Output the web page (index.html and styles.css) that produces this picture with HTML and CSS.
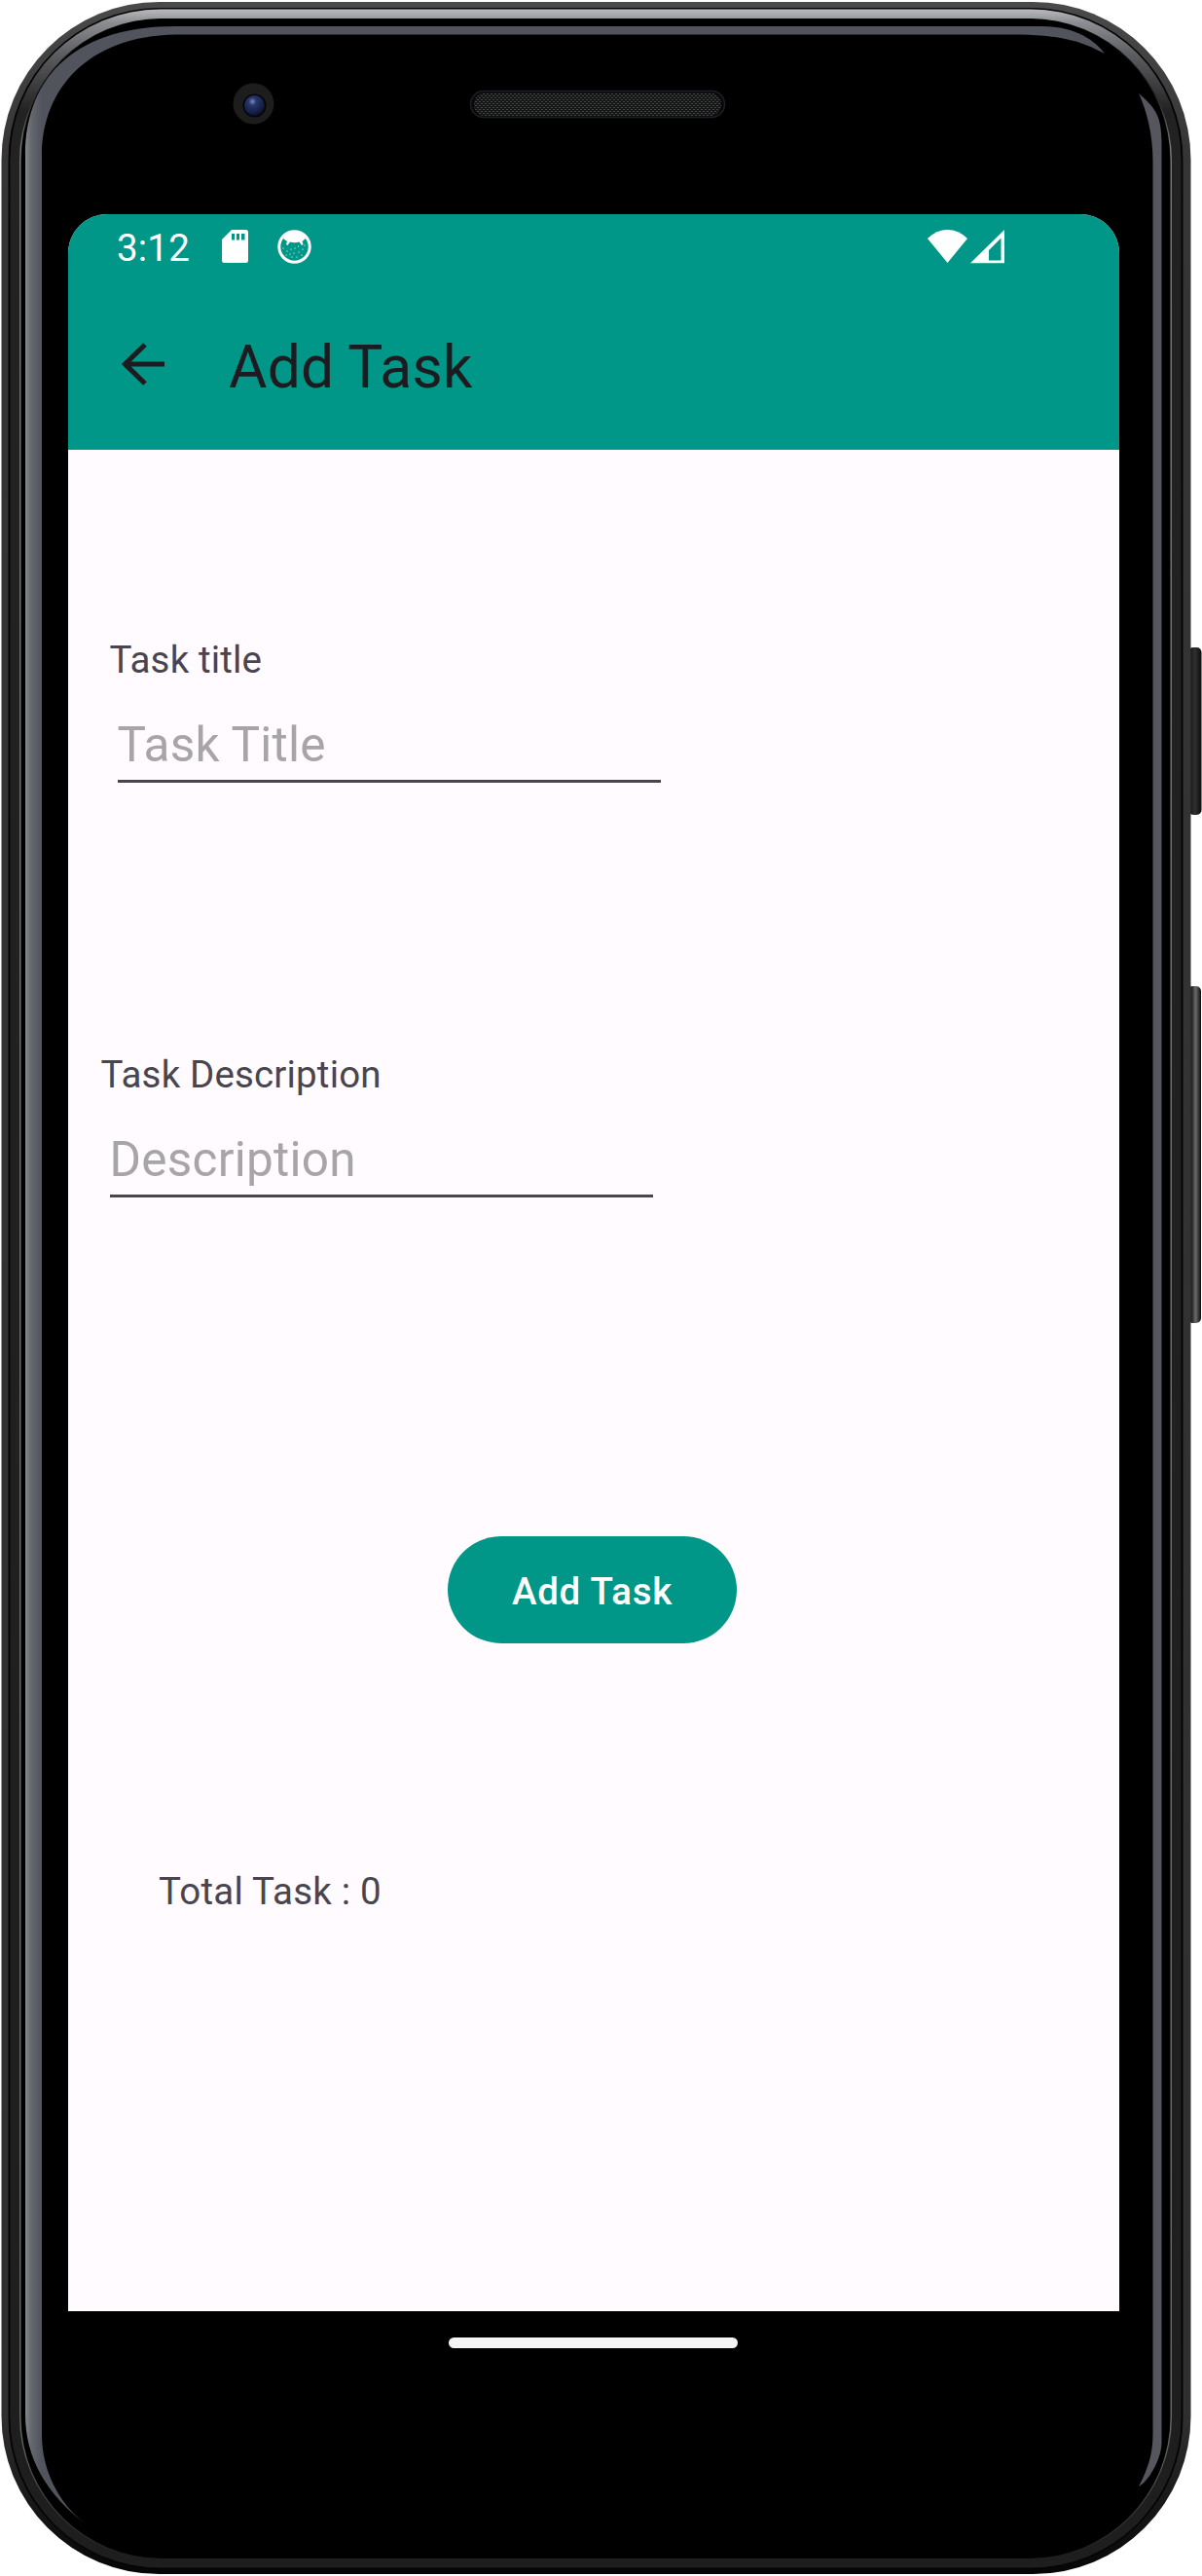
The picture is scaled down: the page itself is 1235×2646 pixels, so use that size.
FILE: index.html
```html
<!DOCTYPE html>
<html lang="en">
<head>
<meta charset="utf-8">
<title>Add Task</title>
<link rel="stylesheet" href="styles.css">
</head>
<body>
<div class="phone">
  <svg class="shell" viewBox="0 0 1235 2646" aria-hidden="true">
    <defs>
      <linearGradient id="bevel" x1="0" y1="0" x2="0" y2="1">
        <stop offset="0" stop-color="#b9babd"/><stop offset=".005" stop-color="#8d8e92"/>
        <stop offset=".018" stop-color="#5b5c60"/><stop offset=".04" stop-color="#222"/><stop offset="1" stop-color="#1e1e1e"/>
      </linearGradient>
      <linearGradient id="rim" x1="0" y1="0" x2="0" y2="1">
        <stop offset="0" stop-color="#4a4a4a"/><stop offset=".06" stop-color="#363435"/>
        <stop offset=".94" stop-color="#302e2f"/><stop offset="1" stop-color="#050505"/>
      </linearGradient>
      <linearGradient id="glint" gradientUnits="userSpaceOnUse" x1="26" y1="0" x2="43" y2="0">
        <stop offset="0" stop-color="#85878c"/><stop offset=".35" stop-color="#666870"/><stop offset="1" stop-color="#52545d"/>
      </linearGradient>
      <linearGradient id="line" x1="0" y1="0" x2="0" y2="1">
        <stop offset="0" stop-color="#000"/><stop offset=".03" stop-color="#222"/><stop offset=".05" stop-color="#777"/>
        <stop offset=".95" stop-color="#666"/><stop offset="1" stop-color="#222"/>
      </linearGradient>
      <linearGradient id="key" x1="0" y1="0" x2="1" y2="0">
        <stop offset="0" stop-color="#111"/><stop offset=".5" stop-color="#303030"/><stop offset="1" stop-color="#0c0c0c"/>
      </linearGradient>
      <linearGradient id="key2" x1="0" y1="0" x2="1" y2="0">
        <stop offset="0" stop-color="#111"/><stop offset=".35" stop-color="#2a2a2a"/><stop offset=".6" stop-color="#6a6a6a"/><stop offset="1" stop-color="#0c0c0c"/>
      </linearGradient>
      <radialGradient id="lens" cx=".4" cy=".3" r=".75">
        <stop offset="0" stop-color="#7d88b4"/><stop offset=".25" stop-color="#28376c"/><stop offset=".7" stop-color="#15214a"/><stop offset="1" stop-color="#080c1c"/>
      </radialGradient>
      <pattern id="mesh" width="4" height="4" patternUnits="userSpaceOnUse">
        <rect width="4" height="4" fill="#151616"/><path d="M0 0h2v1H0zM2 2h2v1H2z" fill="#434644"/>
      </pattern>
    </defs>
    <rect x="1221" y="665" width="13.500" height="172" rx="5" fill="url(#key)"/>
    <rect x="1220" y="1013" width="14" height="346" rx="5" fill="url(#key2)"/>
    <rect x="1.500" y="2" width="1222" height="2642" rx="162" fill="url(#rim)"/>
    <rect x="8.500" y="8" width="1207" height="2631" rx="156" fill="#050505"/>
    <rect x="10.500" y="9.500" width="1203" height="2628" rx="154" fill="url(#bevel)"/>
    <rect x="20" y="19" width="1184" height="2609.500" rx="146" fill="url(#line)"/>
    <rect x="21.500" y="19.500" width="1181" height="2608.500" rx="145" fill="#000"/>
    <path fill="url(#glint)" d="M87 2592Q26 2545 26 2480V160C26 75 82 27 180 27H1070C1107 27 1126 43 1135 55C1110 42 1090 35.500 1040 35.500H180C92 37 43 90 43 160V2500C43 2535 58 2569 87 2592Z"/>
    <path fill="#55565e" d="M1170 96C1187 111 1193 118 1193.500 145V2510C1193 2526 1180 2549 1170 2554C1180 2535 1184.500 2520 1184.500 2500V165C1184.500 138 1178 113 1170 96Z"/>
    <circle cx="260.500" cy="106.500" r="21" fill="#1d1d1e"/>
    <circle cx="261.500" cy="108.500" r="12" fill="#050507"/>
    <circle cx="261.500" cy="108.500" r="10.500" fill="url(#lens)"/>
    <rect x="483.500" y="93.500" width="261" height="27" rx="13.500" fill="#08080a" stroke="#1f1f26" stroke-width="1.500"/>
    <rect x="487" y="95.500" width="254" height="23.500" rx="11.500" fill="url(#mesh)"/>
  </svg>

  <main class="screen">
    <div class="status">
      <span class="clock">3:12</span>
      <svg class="sd" viewBox="0 0 27 34"><path fill="#fff" fill-rule="evenodd" d="M10 0H24.500Q27 0 27 2.500V31.500Q27 34 24.500 34H2.500Q0 34 0 31.500V10ZM10 4V10.500H13V4ZM15 4V10.500H18V4ZM20 4V10.500H23.500V4Z"/></svg>
      <svg class="cat" viewBox="0 0 35 35"><circle cx="17.500" cy="17.500" r="15.700" fill="none" stroke="#fff" stroke-width="3"/><path fill="#fff" d="M6 9Q10 2 17.500 2T29 9L25.500 12L26.500 15L25 16L22.500 12.500Q17.500 14 13 12.500L10.500 16L9 15L10 12Z"/><path stroke="#fff" stroke-width="1.200" stroke-linecap="round" d="M10 22h.1M6 19h.1M14 20h.1M17 24h.1M21.500 17h.1M26 20h.1M22 23h.1M15 28h.1M20 28h.1M9 26h.1M25 26h.1M13 25h.1M18 19h.1M28 16h.1"/></svg>
      <svg class="signals" viewBox="0 0 80 36"><path fill="#fff" d="M0 10Q9 1 20.500 1T41 10L20.500 35Z"/><path fill="#fff" fill-rule="evenodd" d="M44 35.300L79 1V35.300ZM63 22V32.500H75.500V9.500Z"/></svg>
    </div>
    <header class="bar">
      <svg class="back" viewBox="0 0 44 44"><path d="M24 2L3.500 22L24 42M3.500 22H44" fill="none" stroke="#1c1b1f" stroke-width="5.200"/></svg>
      <h1>Add Task</h1>
    </header>
    <section class="field first">
      <label for="t">Task title</label>
      <input id="t" placeholder="Task Title">
    </section>
    <section class="field second">
      <label for="d">Task Description</label>
      <input id="d" placeholder="Description">
    </section>
    <button class="add">Add Task</button>
    <p class="total">Total Task : 0</p>
  </main>
  <div class="handle"></div>
</div>
</body>
</html>
```
FILE: styles.css
```css
* { box-sizing: border-box; }
body { margin: 0; background: #fff; font-family: Roboto, sans-serif; }
.phone { display: grid; grid-template: 220px 2154px 1fr / 70px 1080px 1fr; width: 1235px; height: 2646px; }
.shell { grid-area: 1 / 1 / 4 / 4; width: 1235px; height: 2646px; }
.screen { grid-area: 2 / 2; z-index: 1; background: #fffbfe; border-radius: 40px 40px 0 0; overflow: hidden; display: flex; flex-direction: column; }
.status { flex: none; display: flex; align-items: flex-start; height: 66px; padding: 0 117px 0 50px; background: #009688; color: #fff; }
.clock { width: 108px; padding-top: 12px; font-size: 38.5px; line-height: 45px; letter-spacing: .2px; }
.sd { width: 27px; height: 34px; margin-top: 16px; }
.cat { width: 35px; height: 35px; margin: 16px 0 0 30px; }
.signals { width: 80px; height: 36px; margin: 14.5px 0 0 auto; }
.bar { flex: none; display: flex; align-items: center; height: 176px; padding: 0 0 0 55px; background: #009688; }
.back { width: 44px; height: 44px; margin-top: 0; }
h1 { margin: 8px 0 0 66px; font-size: 60.5px; line-height: 70px; letter-spacing: .2px; font-weight: 400; color: #1c1b1f; }
.field { display: flex; flex-direction: column; width: 558px; }
.field label { font-size: 38.5px; line-height: 46px; letter-spacing: .16px; color: #49454f; }
.field input { height: 82px; margin: 21px 0 0 8px; padding: 7px 0 0; width: 558px; border: 0; border-bottom: 3px solid #49454f; background: none; font: 49.5px/58px Roboto, sans-serif; letter-spacing: .26px; color: #1c1b1f; outline: 0; }
.field input::placeholder { color: #a7a5a7; opacity: 1; }
.first { margin: 193px 0 0 42.5px; }
.second { margin: 277px 0 0 33.5px; }
.second input { margin-left: 9px; }
.add { align-self: flex-start; width: 297px; height: 110px; margin: 348px 0 0 390px; border: 0; border-radius: 55px; background: #009688; color: #fff; font: 500 38.5px/46px Roboto, sans-serif; letter-spacing: .75px; padding: 3px 0 0; }
.total { margin: 232px 0 0 93px; font-size: 38.5px; line-height: 46px; letter-spacing: .2px; color: #49454f; }
.handle { grid-area: 3 / 2; z-index: 1; justify-self: center; width: 297px; height: 11px; margin: 27px 1px 0 0; border-radius: 6px; background: #f5f5f5; }
```
